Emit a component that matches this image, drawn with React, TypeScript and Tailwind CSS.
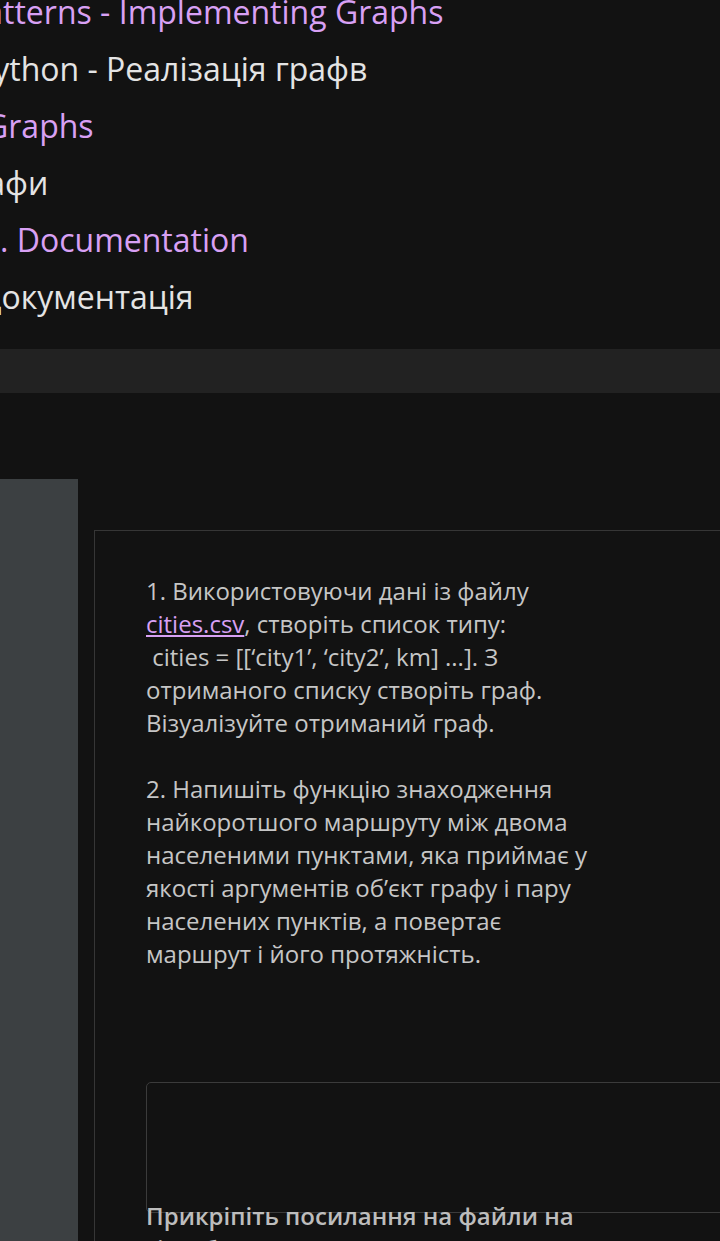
import React from "react";

export default function App() {
  return (
    <div className="min-h-screen overflow-hidden bg-[#121212] font-['Open_Sans',sans-serif]">
      <div className="-mt-[17px] whitespace-nowrap text-[32px] leading-[57px]">
        <div className="-ml-[34px] text-[#d8a0f4]">Patterns - Implementing Graphs</div>
        <div className="-ml-[26px] text-[#e4e4e4]">Python - Реалізація графв</div>
        <div className="-ml-[15px] text-[#d8a0f4]">Graphs</div>
        <div className="-ml-[49px] text-[#e4e4e4]">Графи</div>
        <div className="ml-0 text-[#d8a0f4]">. Documentation</div>
        <div className="-ml-[17px] text-[#e4e4e4]">документація</div>
      </div>
      <div className="mt-[24px] h-[44px] bg-[#222222]" />
      <div className="mt-[86px] flex gap-4">
        <div className="h-[900px] w-[78px] shrink-0 bg-[#3c4042]" />
        <div className="mt-[51px] w-[700px] shrink-0 border border-[#363636] pl-[51px] pt-[43px]">
          <div className="whitespace-nowrap text-[24px] leading-[33px] text-[#c6c6c6]">
            1. Використовуючи дані із файлу
            <br />
            <a className="text-[#d8a0f4] underline underline-offset-2">cities.csv</a>, створіть список типу:
            <br />
            &nbsp;cities = [[‘city1’, ‘city2’, km] ...]. З
            <br />
            отриманого списку створіть граф.
            <br />
            Візуалізуйте отриманий граф.
            <br />
            <br />
            2. Напишіть функцію знаходження
            <br />
            найкоротшого маршруту між двома
            <br />
            населеними пунктами, яка приймає у
            <br />
            якості аргументів об’єкт графу і пару
            <br />
            населених пунктів, а повертає
            <br />
            маршрут і його протяжність.
          </div>
          <div className="mt-[112px] h-[131px] rounded-[5px] border border-[#3b3b3b]" />
          <div className="-mt-[14px] whitespace-nowrap text-[24px] font-semibold leading-[33px] text-[#bdbdbd]">
            Прикріпіть посилання на файли на
            <br />
            гітхаб.
          </div>
        </div>
      </div>
    </div>
  );
}
